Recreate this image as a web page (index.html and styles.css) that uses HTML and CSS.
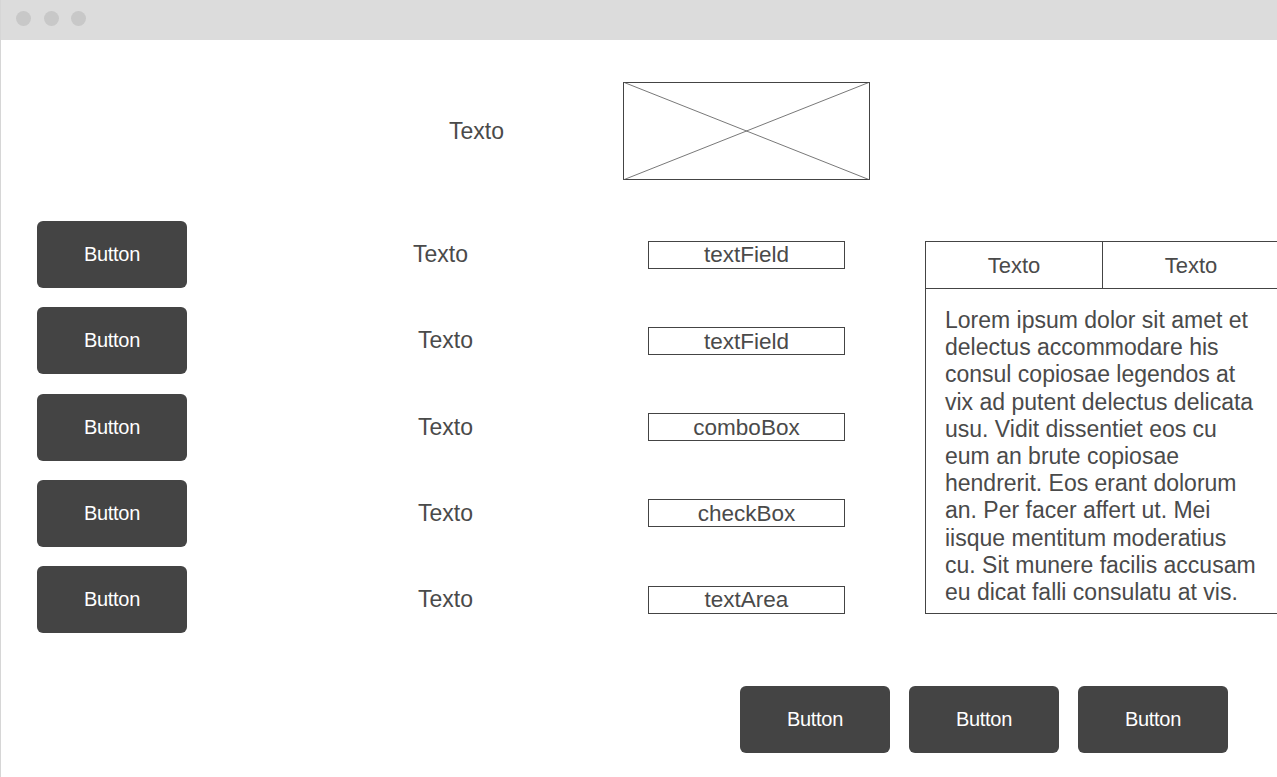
FILE: index.html
```html
<!DOCTYPE html>
<html>
<head>
<meta charset="utf-8">
<link rel="stylesheet" href="styles.css">
</head>
<body>
<div class="window">
  <div class="titlebar">
    <span class="dot"></span><span class="dot"></span><span class="dot"></span>
  </div>
  <div class="content">
    <div class="top">
      <div class="top-label">Texto</div>
      <div class="placeholder">
        <svg viewBox="0 0 247 98" preserveAspectRatio="none" width="247" height="98">
          <rect x="0.5" y="0.5" width="246" height="97" fill="none" stroke="#444" stroke-width="1"/>
          <line x1="0" y1="0" x2="247" y2="98" stroke="#555" stroke-width="0.8"/>
          <line x1="247" y1="0" x2="0" y2="98" stroke="#555" stroke-width="0.8"/>
        </svg>
      </div>
    </div>
    <div class="form">
      <div class="btn">Button</div>
      <div class="label first">Texto</div>
      <div class="field">textField</div>

      <div class="btn">Button</div>
      <div class="label">Texto</div>
      <div class="field">textField</div>

      <div class="btn">Button</div>
      <div class="label">Texto</div>
      <div class="field">comboBox</div>

      <div class="btn">Button</div>
      <div class="label">Texto</div>
      <div class="field">checkBox</div>

      <div class="btn">Button</div>
      <div class="label">Texto</div>
      <div class="field">textArea</div>

      <div class="table">
        <div class="thead">
          <div class="th">Texto</div>
          <div class="th">Texto</div>
        </div>
        <div class="tbody">Lorem ipsum dolor sit amet et delectus accommodare his consul copiosae legendos at vix ad putent delectus delicata usu. Vidit dissentiet eos cu eum an brute copiosae hendrerit. Eos erant dolorum an. Per facer affert ut. Mei iisque mentitum moderatius cu. Sit munere facilis accusam eu dicat falli consulatu at vis.</div>
      </div>
    </div>
    <div class="actions">
      <div class="btn">Button</div>
      <div class="btn">Button</div>
      <div class="btn">Button</div>
    </div>
  </div>
</div>
</body>
</html>
```
FILE: styles.css
```css
html, body {
  margin: 0;
  padding: 0;
  background: #fff;
}
body {
  font-family: "Liberation Sans", Arial, sans-serif;
  color: #4a4a4a;
}
.window {
  width: 1277px;
  height: 777px;
  overflow: hidden;
  box-sizing: border-box;
  border-left: 1px solid #d6d6d6;
}
.titlebar {
  height: 40px;
  box-sizing: border-box;
  background: #dcdcdc;
  display: flex;
  align-items: flex-start;
  gap: 12.5px;
  padding-left: 16px;
  padding-top: 11px;
  margin-left: -1px;
}
.dot {
  width: 15px;
  height: 15px;
  border-radius: 50%;
  background: #c8c8c8;
}
.content {
  display: flex;
  flex-direction: column;
}
.top {
  display: flex;
  align-items: center;
  margin-top: 42px;
  height: 98px;
}
.top-label {
  margin-left: 448px;
  width: 174px;
  font-size: 23px;
}
.placeholder {
  width: 247px;
  height: 98px;
}
.placeholder svg { display: block; }
.form {
  display: grid;
  grid-template-columns: 150px 461px 197px 352px;
  grid-template-rows: repeat(5, 67px);
  row-gap: 19.25px;
  margin-top: 41px;
  margin-left: 36px;
  align-items: center;
}
.form > .table {
  grid-column: 4 / 5;
  grid-row: 1 / 6;
  margin-left: 80px;
  align-self: start;
  margin-top: 20px;
}
.btn {
  width: 150px;
  height: 67px;
  background: #444;
  border-radius: 6px;
  color: #fff;
  font-size: 20px;
  letter-spacing: -0.3px;
  display: flex;
  align-items: center;
  justify-content: center;
}
.label {
  font-size: 23px;
  padding-left: 231px;
}
.label.first { padding-left: 226px; }
.field {
  box-sizing: border-box;
  height: 28px;
  padding-top: 2px;
  border: 1px solid #444;
  font-size: 22.5px;
  display: flex;
  align-items: center;
  justify-content: center;
  line-height: 1;
}
.table {
  width: 360px;
  height: 373px;
  box-sizing: border-box;
  border: 1px solid #444;
}
.thead {
  display: flex;
  height: 47px;
  border-bottom: 1px solid #444;
  box-sizing: border-box;
}
.th {
  width: 176px;
  display: flex;
  align-items: center;
  justify-content: center;
  font-size: 22px;
  padding-top: 1px;
}
.th:first-child { border-right: 1px solid #444; }
.tbody {
  padding: 18px 0 0 19px;
  width: 334px;
  box-sizing: border-box;
  font-size: 23px;
  line-height: 27.2px;
}
.actions {
  display: flex;
  justify-content: flex-end;
  gap: 19px;
  margin-top: 53px;
  padding-right: 49px;
}
```
